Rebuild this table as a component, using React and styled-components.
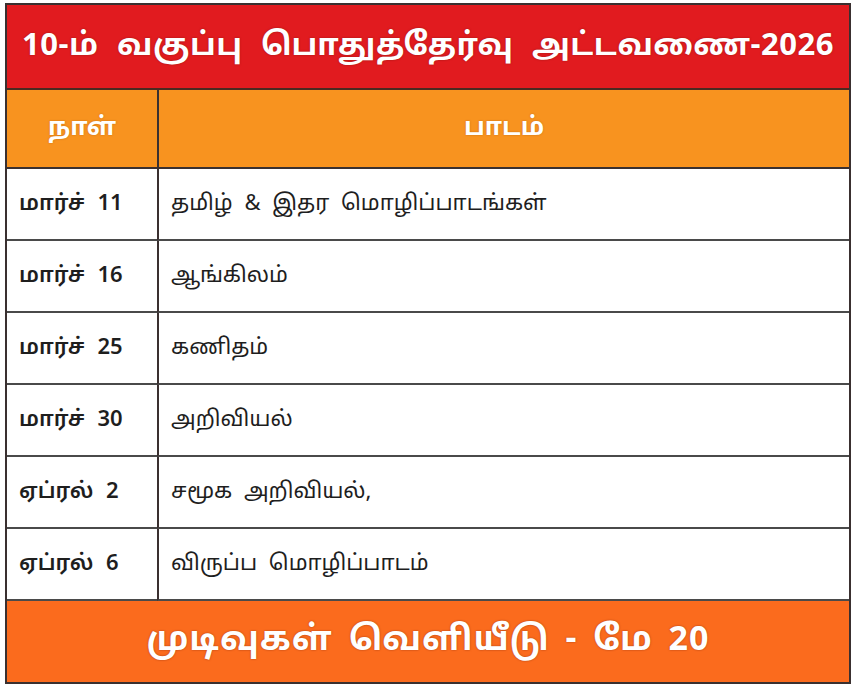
import styled, { createGlobalStyle } from "styled-components";

const schedule = [
  { date: "மார்ச் 11", subject: "தமிழ் & இதர மொழிப்பாடங்கள்" },
  { date: "மார்ச் 16", subject: "ஆங்கிலம்" },
  { date: "மார்ச் 25", subject: "கணிதம்" },
  { date: "மார்ச் 30", subject: "அறிவியல்" },
  { date: "ஏப்ரல் 2", subject: "சமூக அறிவியல்," },
  { date: "ஏப்ரல் 6", subject: "விருப்ப மொழிப்பாடம்" },
];

const GlobalStyle = createGlobalStyle`
  html, body {
    margin: 0;
    background: #ffffff;
  }
  body {
    font-family: "Noto Sans Tamil", "Lohit Tamil", "Noto Sans", "Liberation Sans", sans-serif;
  }
`;

const Page = styled.div`
  padding: 3px 9px 6px 5px;
`;

const Board = styled.div`
  border: 2px solid #3a3030;
  display: grid;
  grid-template-columns: 150px 1fr;
`;

const Banner = styled.div`
  grid-column: 1 / -1;
  height: ${(p) => p.$h}px;
  background: ${(p) => p.$bg};
  color: #ffffff;
  display: flex;
  align-items: center;
  justify-content: center;
  white-space: nowrap;
  font-weight: 700;
  font-size: ${(p) => p.$size}px;
  letter-spacing: ${(p) => p.$track}px;
  word-spacing: ${(p) => p.$gap}px;
  text-shadow: 0 0 2px rgba(90, 20, 10, 0.55);
  border-bottom: ${(p) => (p.$last ? "none" : "2px solid #4a2a20")};
`;

const HeadCell = styled.div`
  height: 77px;
  background: #f8931f;
  color: #ffffff;
  font-weight: 700;
  font-size: 25px;
  display: flex;
  align-items: center;
  justify-content: center;
  text-shadow: 0 0 2px rgba(120, 50, 0, 0.4);
  border-bottom: 2px solid #3a3030;
  border-left: ${(p) => (p.$divider ? "2px solid #3a3030" : "none")};
`;

const Cell = styled.div`
  height: 70px;
  display: flex;
  align-items: center;
  padding-left: 12px;
  color: #1e1e1e;
  font-size: 22px;
  font-weight: ${(p) => (p.$bold ? 600 : 400)};
  border-bottom: 2px solid #4a4a4a;
  border-left: ${(p) => (p.$divider ? "2px solid #3a3030" : "none")};
  word-spacing: ${(p) => (p.$bold ? 7 : 6)}px;
`;

export default function App() {
  return (
    <>
      <GlobalStyle />
      <Page>
        <Board>
          <Banner $h={83} $bg="#e11b1f" $size={31} $track={0.5} $gap={10}>
            10-ம் வகுப்பு பொதுத்தேர்வு அட்டவணை-2026
          </Banner>
          <HeadCell>நாள்</HeadCell>
          <HeadCell $divider>பாடம்</HeadCell>
          {schedule.map((row) => (
            <>
              <Cell key={row.date + "d"} $bold>
                {row.date}
              </Cell>
              <Cell key={row.date + "s"} $divider>
                {row.subject}
              </Cell>
            </>
          ))}
          <Banner $h={81} $bg="#fb6b1d" $size={34} $track={1} $gap={6} $last>
            முடிவுகள் வெளியீடு - மே 20
          </Banner>
        </Board>
      </Page>
    </>
  );
}
